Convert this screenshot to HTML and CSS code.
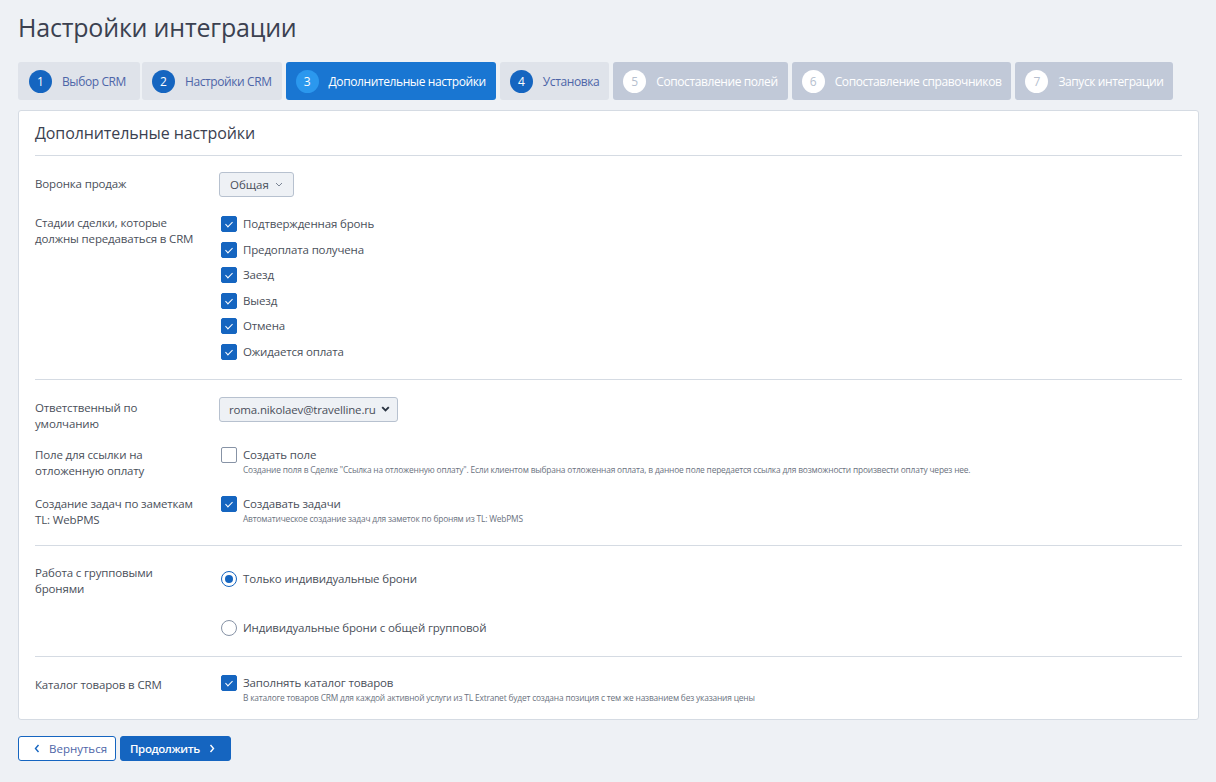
FILE: index.html
```html
<!DOCTYPE html>
<html lang="ru">
<head>
<meta charset="utf-8">
<link rel="stylesheet" href="styles.css">
</head>
<body>
<h1 class="page-title">Настройки интеграции</h1>
<nav class="steps">
  <div class="step done first"><span class="num">1</span>Выбор CRM</div>
  <div class="step done"><span class="num">2</span>Настройки CRM</div>
  <div class="step active"><span class="num">3</span>Дополнительные настройки</div>
  <div class="step done"><span class="num">4</span>Установка</div>
  <div class="step off"><span class="num">5</span>Сопоставление полей</div>
  <div class="step off"><span class="num">6</span>Сопоставление справочников</div>
  <div class="step off"><span class="num">7</span>Запуск интеграции</div>
</nav>
<section class="card">
  <h2 class="card-title">Дополнительные настройки</h2>
  <div class="group g-funnel">
    <div class="row r-funnel">
      <div class="label">Воронка продаж</div>
      <div class="control"><button class="dropdown">Общая <svg width="8" height="5" viewBox="0 0 8 5"><path d="M1 1l3 3 3-3" fill="none" stroke="#7a8494" stroke-width="1"/></svg></button></div>
    </div>
    <div class="row">
      <div class="label">Стадии сделки, которые должны передаваться в CRM</div>
      <div class="control checks">
        <label class="check"><span class="box on"></span>Подтвержденная бронь</label>
        <label class="check"><span class="box on"></span>Предоплата получена</label>
        <label class="check"><span class="box on"></span>Заезд</label>
        <label class="check"><span class="box on"></span>Выезд</label>
        <label class="check"><span class="box on"></span>Отмена</label>
        <label class="check"><span class="box on"></span>Ожидается оплата</label>
      </div>
    </div>
  </div>
  <div class="group g-misc">
    <div class="row r-owner">
      <div class="label">Ответственный по умолчанию</div>
      <div class="control"><div class="select"><span>roma.nikolaev@travelline.ru</span><svg width="9" height="6" viewBox="0 0 9 6"><path d="M1.2 1.2l3.3 3.3 3.3-3.3" fill="none" stroke="#2b3442" stroke-width="1.9"/></svg></div></div>
    </div>
    <div class="row r-link">
      <div class="label">Поле для ссылки на отложенную оплату</div>
      <div class="control">
        <label class="check"><span class="box"></span>Создать поле</label>
        <div class="hint">Создание поля в Сделке "Ссылка на отложенную оплату". Если клиентом выбрана отложенная оплата, в данное поле передается ссылка для возможности произвести оплату через нее.</div>
      </div>
    </div>
    <div class="row">
      <div class="label">Создание задач по заметкам TL: WebPMS</div>
      <div class="control">
        <label class="check"><span class="box on"></span>Создавать задачи</label>
        <div class="hint">Автоматическое создание задач для заметок по броням из TL: WebPMS</div>
      </div>
    </div>
  </div>
  <div class="group g-group">
    <div class="row">
      <div class="label">Работа с групповыми бронями</div>
      <div class="control radios">
        <label class="radio"><span class="dot on"></span>Только индивидуальные брони</label>
        <label class="radio"><span class="dot"></span>Индивидуальные брони с общей групповой</label>
      </div>
    </div>
  </div>
  <div class="group g-catalog">
    <div class="row">
      <div class="label">Каталог товаров в CRM</div>
      <div class="control c-catalog">
        <label class="check"><span class="box on"></span>Заполнять каталог товаров</label>
        <div class="hint">В каталоге товаров CRM для каждой активной услуги из TL Extranet будет создана позиция с тем же названием без указания цены</div>
      </div>
    </div>
  </div>
</section>
<div class="actions">
  <button class="btn btn-back"><svg width="6" height="9" viewBox="0 0 6 9"><path d="M4.5 1L1.5 4.5 4.5 8" fill="none" stroke="#1565c0" stroke-width="1.4"/></svg>Вернуться</button>
  <button class="btn btn-next">Продолжить<svg width="6" height="9" viewBox="0 0 6 9"><path d="M1.5 1l3 3.5-3 3.5" fill="none" stroke="#fff" stroke-width="1.4"/></svg></button>
</div>
</body>
</html>
```
FILE: styles.css
```css
* { box-sizing: border-box; }
body {
  margin: 0;
  padding: 12px 18px;
  background: #eef1f5;
  font-family: "Open Sans", "Noto Sans", sans-serif;
  font-size: 11.5px;
  letter-spacing: -0.15px;
  color: #4a4f5a;
}
.page-title {
  margin: 0 0 20px;
  font-size: 25px;
  font-weight: 400;
  line-height: 30px;
  color: #3b4150;
  letter-spacing: -0.2px;
}
.steps {
  display: flex;
  gap: 4px;
  margin-bottom: 10px;
}
.step {
  display: flex;
  align-items: center;
  height: 38px;
  padding: 0 10px;
  border-radius: 3px;
  font-size: 12px;
  letter-spacing: -0.4px;
  white-space: nowrap;
}
.step.first { padding-left: 11px; padding-right: 14px; margin-right: -2px; }
.step .num {
  width: 23px;
  height: 23px;
  border-radius: 50%;
  display: inline-flex;
  align-items: center;
  justify-content: center;
  margin-right: 10px;
  font-size: 12px;
  letter-spacing: 0;
}
.step.done { background: #dfe3ea; color: #4d65a8; }
.step.done .num { background: #1565c0; color: #fff; }
.step.active { background: #1976d2; color: #fff; }
.step.active .num { background: #2b98ee; color: #fff; }
.step.off { background: #c1c9d8; color: #fff; }
.step.off .num { background: #fff; color: #b6bfcf; }
.card {
  background: #fff;
  border: 1px solid #d5dbe3;
  border-radius: 3px;
  padding: 0 16px;
  width: 1181px;
}
.card-title {
  margin: 0;
  padding: 10px 0 10px;
  font-size: 16px;
  font-weight: 400;
  line-height: 24px;
  letter-spacing: -0.1px;
  color: #3b4150;
  border-bottom: 1px solid #d5dbe3;
}
.group { border-bottom: 1px solid #d5dbe3; }
.row { display: flex; align-items: flex-start; }
.label {
  width: 184px;
  flex: none;
  padding-right: 22px;
  line-height: 16px;
  color: #4a4f5a;
}
.control { flex: 1; }

.g-funnel { padding: 20px 0 19px; }
.r-funnel { margin-bottom: 18px; }
.dropdown {
  display: flex;
  align-items: center;
  gap: 6px;
  height: 25px;
  padding: 0 10px;
  margin-top: -4px;
  background: #eef1f5;
  border: 1px solid #b7c1cf;
  border-radius: 3px;
  font: inherit;
  color: #4a4f5a;
}
.checks { display: flex; flex-direction: column; gap: 9.6px; padding-top: 1px; }
.check, .radio {
  display: flex;
  align-items: center;
  line-height: 16px;
  color: #4a4f5a;
}
.box {
  width: 16px;
  height: 16px;
  border: 1px solid #8793a6;
  border-radius: 2px;
  margin: 0 6px 0 2px;
  flex: none;
  position: relative;
}
.box.on { background: #1565c0; border-color: #1565c0; }
.box.on::after {
  content: "";
  position: absolute;
  left: 4.5px;
  top: 3px;
  width: 3px;
  height: 6px;
  border: solid #fff;
  border-width: 0 1px 1px 0;
  transform: rotate(45deg);
}

.g-misc { padding: 20px 0 17px; }
.r-owner { margin-bottom: 15px; }
.r-link { margin-bottom: 17px; }
.select {
  display: flex;
  align-items: center;
  justify-content: space-between;
  width: 179px;
  height: 25px;
  padding: 0 7px 0 9px;
  margin-top: -3px;
  background: #eef1f5;
  border: 1px solid #b7c1cf;
  border-radius: 3px;
  color: #4a4f5a;
}
.hint {
  margin: 1px 0 0 24px;
  font-size: 8.4px;
  line-height: 11px;
  color: #6b7280;
  letter-spacing: -0.18px;
  white-space: nowrap;
}

.g-group { padding: 19px 0 20px; }
.radios { display: flex; flex-direction: column; gap: 33px; padding-top: 6px; }
.dot {
  width: 16px;
  height: 16px;
  border: 1px solid #8793a6;
  border-radius: 50%;
  margin: 0 6px 0 2px;
  flex: none;
  display: flex;
  align-items: center;
  justify-content: center;
}
.dot.on { border-color: #1565c0; }
.dot.on::after {
  content: "";
  width: 8px;
  height: 8px;
  border-radius: 50%;
  background: #1565c0;
}

.g-catalog { border-bottom: 0; padding: 20px 0 16px; }
.c-catalog { margin-top: -2px; }

.actions {
  display: flex;
  gap: 4px;
  margin-top: 16px;
}
.btn {
  display: inline-flex;
  align-items: center;
  gap: 9px;
  height: 25px;
  border-radius: 3px;
  font: inherit;
  font-size: 11.5px;
  cursor: pointer;
}
.btn-back {
  background: #fff;
  border: 1px solid #1565c0;
  color: #4d65a8;
  padding: 0 8px 0 15px;
}
.btn-next {
  background: #1565c0;
  border: 1px solid #1565c0;
  color: #fff;
  font-weight: 600;
  letter-spacing: -0.4px;
  padding: 0 15px 0 9px;
}
```
